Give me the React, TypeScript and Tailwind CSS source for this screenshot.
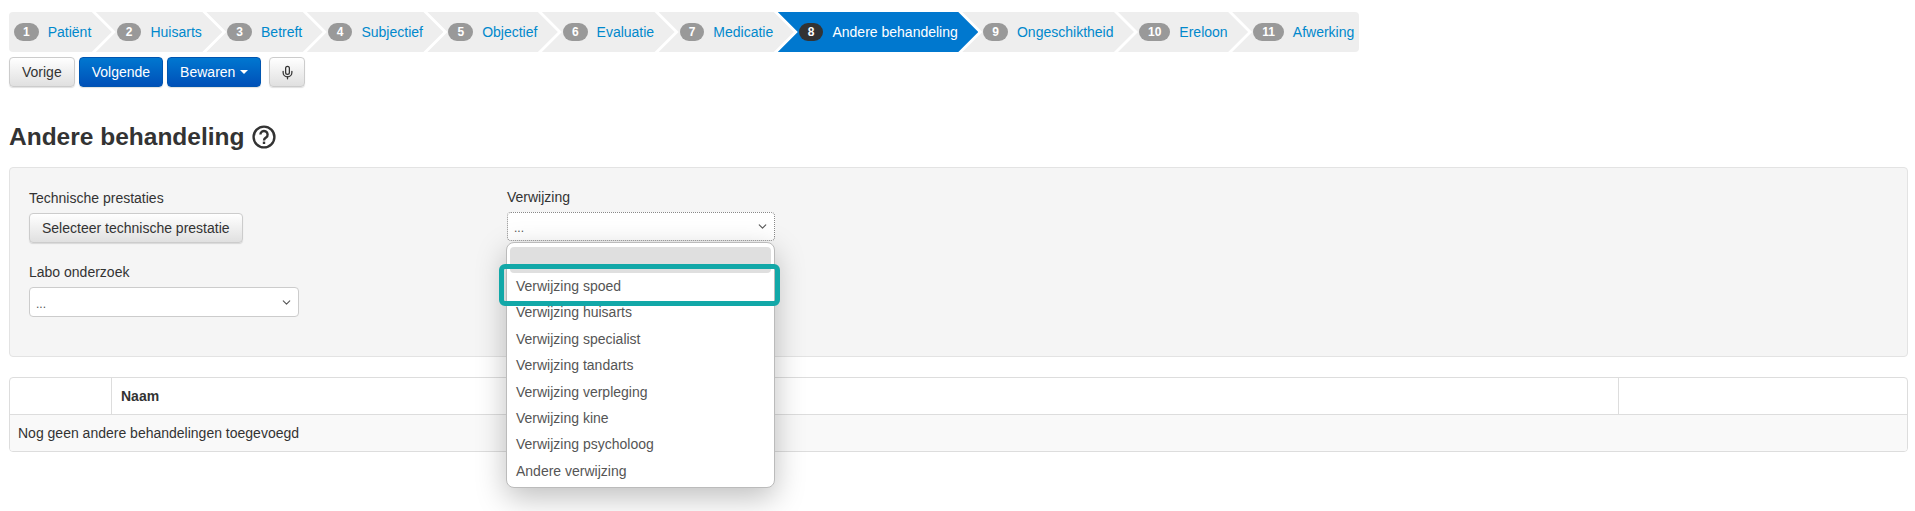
import { ChevronDown, Mic } from "lucide-react"

type Step = { nr: number; label: string }

const steps: Step[] = [
  { nr: 1, label: "Patiënt" },
  { nr: 2, label: "Huisarts" },
  { nr: 3, label: "Betreft" },
  { nr: 4, label: "Subjectief" },
  { nr: 5, label: "Objectief" },
  { nr: 6, label: "Evaluatie" },
  { nr: 7, label: "Medicatie" },
  { nr: 8, label: "Andere behandeling" },
  { nr: 9, label: "Ongeschiktheid" },
  { nr: 10, label: "Ereloon" },
  { nr: 11, label: "Afwerking" },
]

const options = [
  "Verwijzing spoed",
  "Verwijzing huisarts",
  "Verwijzing specialist",
  "Verwijzing tandarts",
  "Verwijzing verpleging",
  "Verwijzing kine",
  "Verwijzing psycholoog",
  "Andere verwijzing",
]

function WizardStep({ step }: { step: Step }) {
  const active = step.nr === 8
  const first = step.nr === 1
  const last = step.nr === 11

  let shape = "[clip-path:polygon(0_0,calc(100%-20px)_0,100%_50%,calc(100%-20px)_100%,0_100%,20px_50%)]"
  if (first) shape = "[clip-path:polygon(0_0,calc(100%-20px)_0,100%_50%,calc(100%-20px)_100%,0_100%)]"
  if (last) shape = "[clip-path:polygon(0_0,100%_0,100%_100%,0_100%,20px_50%)]"

  return (
    <div
      className={`flex h-10 items-center ${first ? "pl-[5px]" : "-ml-4 pl-[21px]"} ${last ? "pr-[5px]" : "pr-[20.5px]"} ${shape} ${active ? "bg-[#0078cf]" : "bg-[#eeeeee]"}`}
    >
      <span
        className={`flex h-[18px] items-center justify-center rounded-[9px] px-[9px] text-[12px] font-bold text-white ${active ? "bg-[#333333]" : "bg-[#999999]"}`}
      >
        {step.nr}
      </span>
      <span className={`ml-[9px] whitespace-nowrap ${active ? "text-white" : "text-[#0088cc]"}`}>{step.label}</span>
    </div>
  )
}

function Btn({ children, primary, slim }: { children: React.ReactNode; primary?: boolean; slim?: boolean }) {
  return (
    <div
      className={`flex h-[30px] items-center rounded-[4px] border shadow-[0_1px_1px_rgba(0,0,0,0.12)] ${slim ? "px-[9.5px]" : "px-3"} ${
        primary
          ? "border-[#0055b0] bg-gradient-to-b from-[#0077d0] to-[#0050b8] text-white"
          : "border-[#cccccc] bg-gradient-to-b from-white to-[#e0e0e0] text-[#333333]"
      }`}
    >
      {children}
    </div>
  )
}

function SelectBox({ dotted }: { dotted?: boolean }) {
  return (
    <div
      className={`flex items-center justify-between rounded-[4px] border bg-white pr-[5px] pl-[6px] text-[#555555] ${dotted ? "h-[29px] border-dotted border-[#888888]" : "h-[30px] border-[#cccccc]"}`}
    >
      <span className="pt-[3px] text-[12px]">...</span>
      <ChevronDown size={13} strokeWidth={2} color="#555555" />
    </div>
  )
}

export default function App() {
  return (
    <div className="h-[511px] overflow-hidden bg-white pt-3 pr-[7px] pl-[9px] font-['Liberation_Sans',Arial,sans-serif] text-[14px] text-[#333333]">
      <div className="flex w-fit overflow-hidden rounded-[4px]">
        {steps.map((step) => (
          <WizardStep key={step.nr} step={step} />
        ))}
      </div>

      <div className="mt-[5px] flex">
        <Btn>Vorige</Btn>
        <div className="ml-1">
          <Btn primary>Volgende</Btn>
        </div>
        <div className="ml-1">
          <Btn primary>
            Bewaren
            <span className="ml-[5px] h-0 w-0 border-x-4 border-t-4 border-x-transparent border-t-white" />
          </Btn>
        </div>
        <div className="ml-2">
          <Btn slim>
            <Mic size={15} strokeWidth={2} color="#333333" />
          </Btn>
        </div>
      </div>

      <div className="mt-[33px] flex h-[34px] items-center">
        <h1 className="text-[24.5px] leading-[34px] font-bold text-[#333333]">Andere behandeling</h1>
        <svg className="ml-[7px]" width="24" height="24" viewBox="0 0 24 24" fill="none">
          <circle cx="12" cy="12" r="10.4" stroke="#333333" strokeWidth="2.4" />
          <path d="M8.4 9.6a3.6 3.6 0 1 1 5.7 2.9c-1.3.9-2.1 1.4-2.1 2.9" stroke="#333333" strokeWidth="2.4" />
          <rect x="10.8" y="16.6" width="2.4" height="2.4" fill="#333333" />
        </svg>
      </div>

      <div className="mt-[13px] grid h-[190px] grid-cols-[478px_1fr] rounded-[4px] border border-[#e3e3e3] bg-[#f5f5f5] pt-5 pl-[19px]">
        <div className="w-[270px]">
          <div className="leading-5">Technische prestaties</div>
          <div className="mt-[5px] w-fit">
            <Btn>Selecteer technische prestatie</Btn>
          </div>
          <div className="mt-[19px] leading-5">Labo onderzoek</div>
          <div className="mt-[5px]">
            <SelectBox />
          </div>
        </div>
        <div className="relative w-[268px]">
          <div className="-mt-px leading-5">Verwijzing</div>
          <div className="mt-[5px]">
            <SelectBox dotted />
          </div>
          <div className="absolute top-[54px] -left-px z-10 w-[269px] rounded-[8px] border border-[#bbbbbb] bg-white px-[3px] pt-1 pb-[3px] text-[14px] text-[#555555] shadow-[0_10px_30px_rgba(0,0,0,0.25)]">
            <div className="h-[26px] rounded-[4px] bg-[#dfdfdf]" />
            {options.map((option) => (
              <div key={option} className="h-[26.4px] px-[6px] leading-[26px]">
                {option}
              </div>
            ))}
          </div>
          <div className="absolute top-[76px] -left-2 z-20 h-[42px] w-[281px] rounded-[6px] border-[5px] border-[#12a8a8]" />
        </div>
      </div>

      <div className="mt-[20px] overflow-hidden rounded-[4px] border border-[#dddddd]">
        <div className="flex h-9">
          <div className="w-[102px] border-r border-[#dddddd]" />
          <div className="flex flex-1 items-center px-[9px] font-bold">Naam</div>
          <div className="w-[289px] border-l border-[#dddddd]" />
        </div>
        <div className="flex h-[37px] items-center border-t border-[#dddddd] bg-[#f9f9f9] px-2">
          Nog geen andere behandelingen toegevoegd
        </div>
      </div>
    </div>
  )
}
